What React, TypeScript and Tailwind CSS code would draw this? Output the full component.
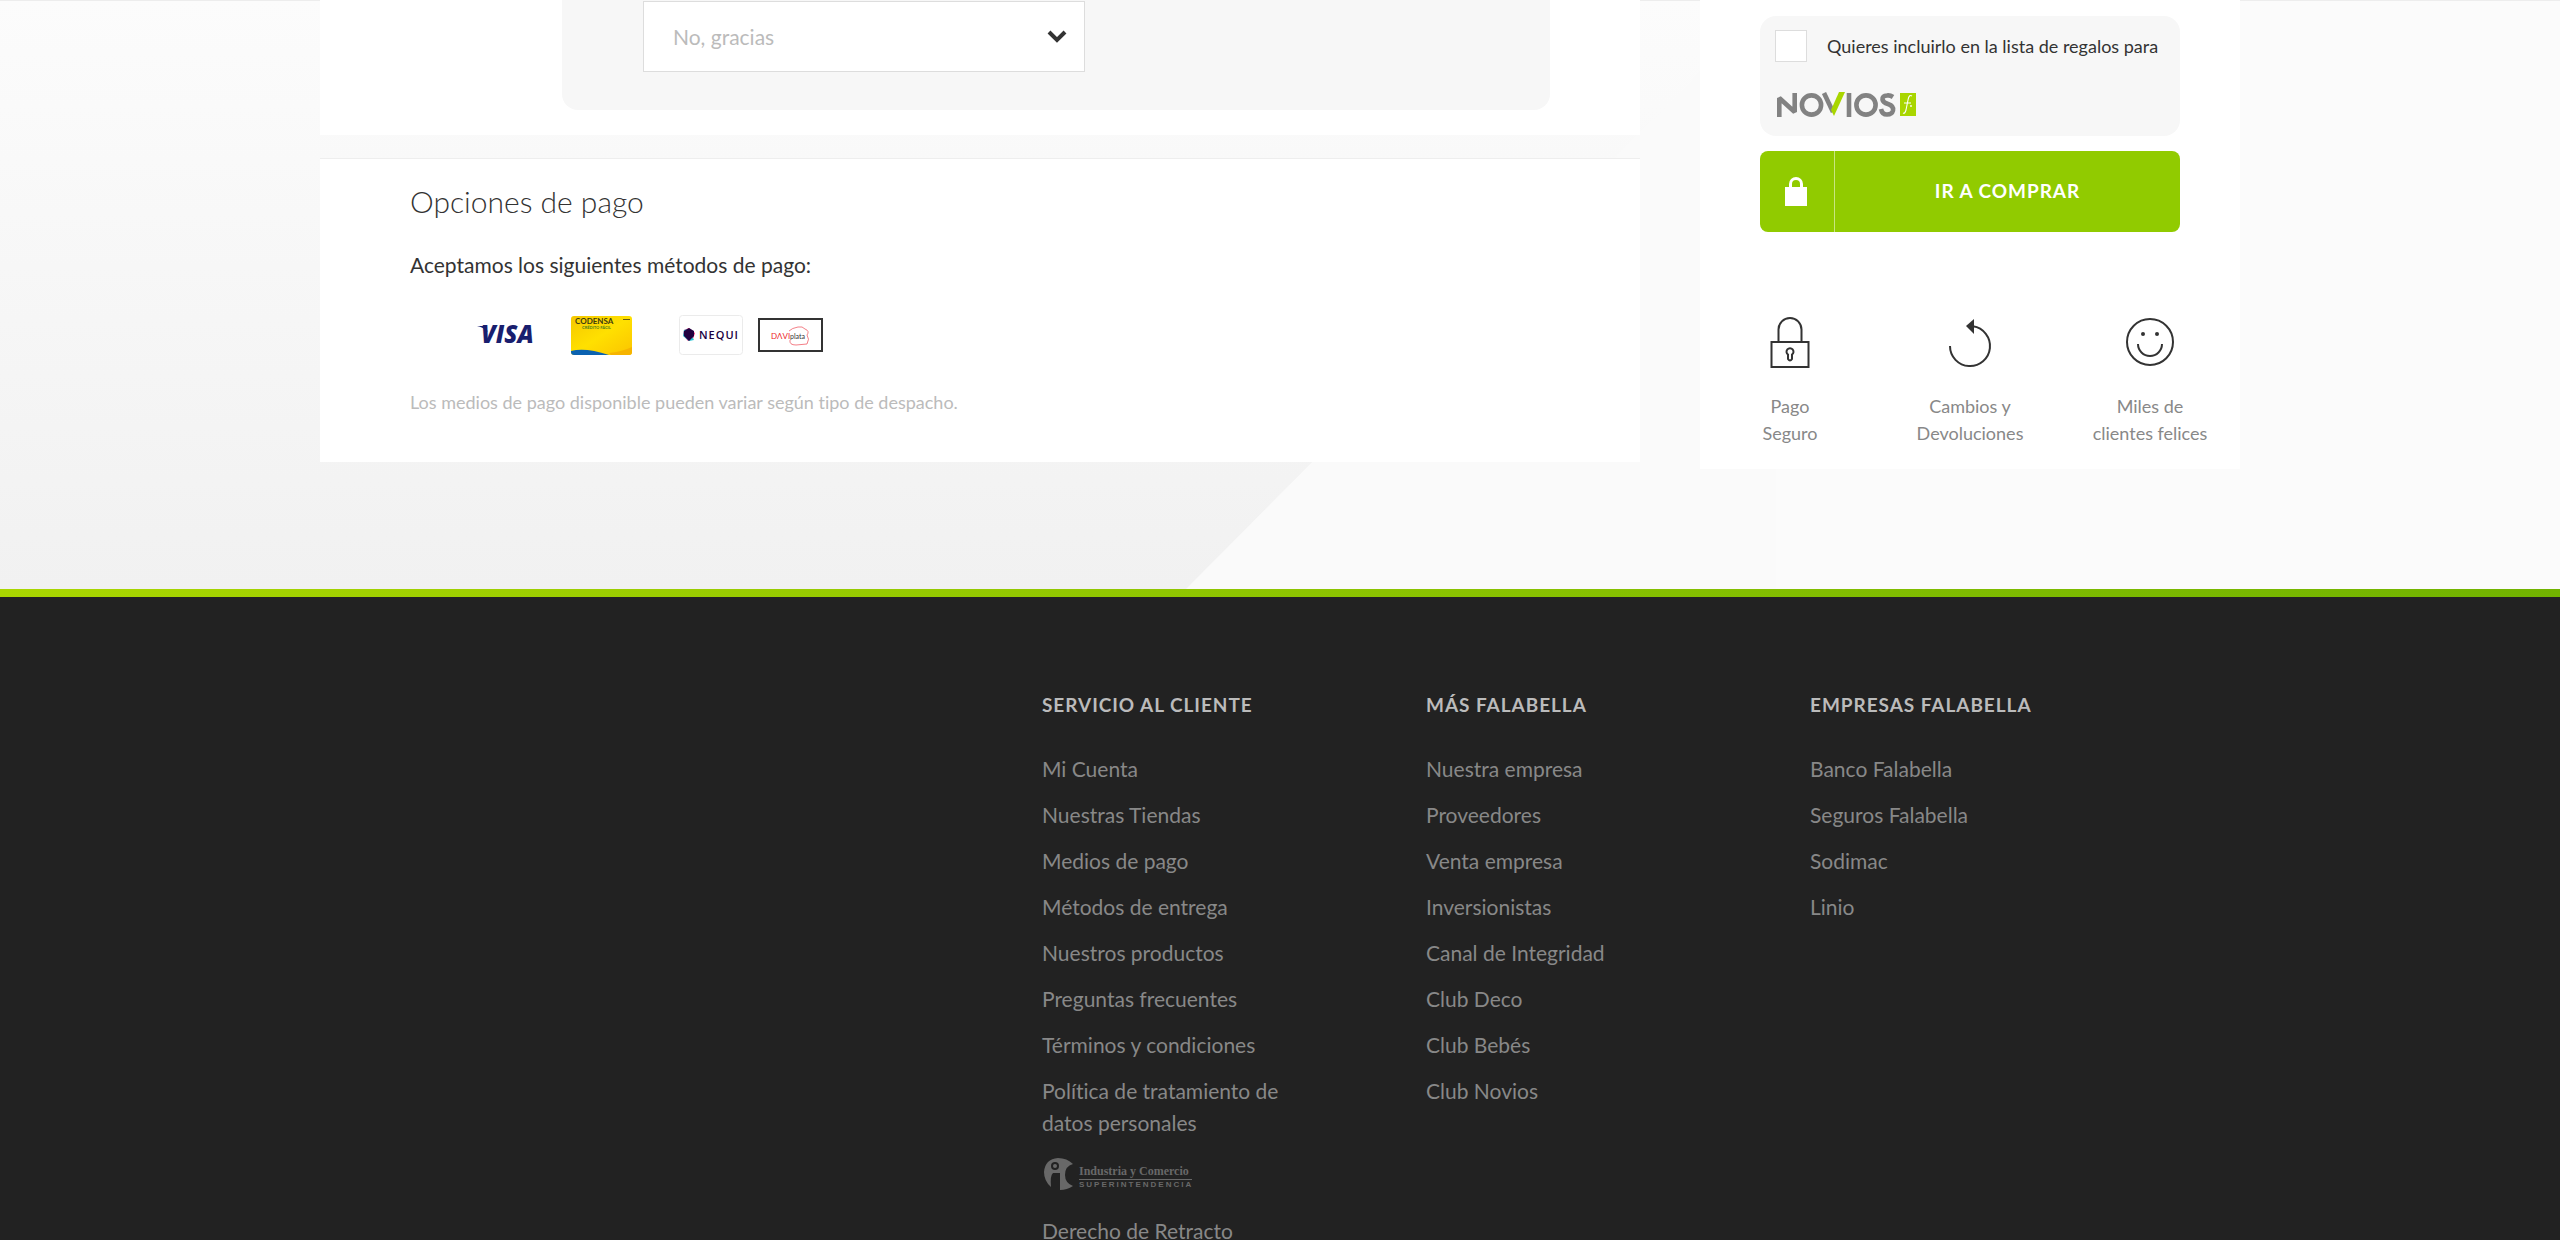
import React from "react";

const columns = [
  {
    title: "SERVICIO AL CLIENTE",
    links: ["Mi Cuenta", "Nuestras Tiendas", "Medios de pago", "Métodos de entrega", "Nuestros productos", "Preguntas frecuentes", "Términos y condiciones", "Política de tratamiento de datos personales"],
  },
  {
    title: "MÁS FALABELLA",
    links: ["Nuestra empresa", "Proveedores", "Venta empresa", "Inversionistas", "Canal de Integridad", "Club Deco", "Club Bebés", "Club Novios"],
  },
  { title: "EMPRESAS FALABELLA", links: ["Banco Falabella", "Seguros Falabella", "Sodimac", "Linio"] },
];

function Visa() {
  return (
    <svg className="h-10 w-16" viewBox="0 0 64 40" aria-label="Visa" role="img">
      <path d="M6 11 H14 L17 17 Q12 12 6 11Z" fill="#191e6e" />
      <text x="10" y="28" fontFamily="Open Sans" fontWeight="800" fontStyle="italic" fontSize="24" fill="#191e6e">VISA</text>
    </svg>
  );
}

function Codensa() {
  return (
    <svg className="h-[39px] w-[61px]" viewBox="0 0 61 39" aria-label="Codensa" role="img">
      <defs>
        <linearGradient id="gold" x1="0" y1="0" x2="1" y2="1">
          <stop offset="0" stopColor="#f5c800" />
          <stop offset="0.5" stopColor="#ffe000" />
          <stop offset="1" stopColor="#fbc400" />
        </linearGradient>
      </defs>
      <rect width="61" height="39" rx="3" fill="url(#gold)" />
      <path d="M0 35 Q14 31 38 39 H3 Q0 39 0 36Z" fill="#0b62b0" />
      <path d="M38 37 Q50 36 61 31 V36 Q61 39 58 39 H40Z" fill="#f6b400" />
      <text x="4" y="8" fontFamily="Lato" fontWeight="700" fontSize="8" fill="#3d3a10">CODENSA</text>
      <text x="11" y="13" fontFamily="Lato" fontWeight="700" fontSize="4" fill="#4d7d1e">CRÉDITO FÁCIL</text>
      <rect x="52" y="3" width="7" height="1" fill="#6b5b10" />
    </svg>
  );
}

function Nequi() {
  return (
    <svg className="h-10 w-16" viewBox="0 0 64 40" aria-label="Nequi" role="img">
      <rect x="0.5" y="0.5" width="63" height="39" rx="3" fill="#fff" stroke="#ebebeb" />
      <path d="M10 13 L16 18 L14 24 L9 26 L4 20 L5 15Z" fill="#ff2e7e" />
      <path d="M5 15 L9 14 L15 25 L10 26 L4 21Z" fill="#25c5d4" />
      <path d="M10 13 L15 16 L15 21 L10 26 L5 21 L5 16Z" fill="#200040" />
      <text x="20" y="24" fontFamily="Open Sans" fontWeight="600" fontSize="11" letterSpacing="1" fill="#200040">NEQUI</text>
    </svg>
  );
}

function Daviplata() {
  return (
    <svg className="h-[34px] w-[65px]" viewBox="0 0 65 34" aria-label="Daviplata" role="img">
      <rect x="1" y="1" width="63" height="32" fill="#fff" stroke="#333" strokeWidth="2" />
      <path d="M31 13 Q34 10 40 9 L44 9 L47 11 Q52 13 49 17 Q52 21 49 26 L38 27 Q31 27 32 22" fill="none" stroke="#f0606a" strokeWidth="0.8" />
      <text x="13" y="20.5" fontFamily="Lato" fontSize="8" fill="#ed1c27">DΛVI</text>
      <text x="32" y="20.5" fontFamily="Lato" fontSize="7" fill="#333">plata</text>
    </svg>
  );
}

function Novios() {
  return (
    <svg className="h-7 w-[144px]" viewBox="0 0 144 28" aria-label="Novios" role="img">
      <g fill="none" stroke="#828282" strokeWidth="4.6">
        <path d="M3.3 25 V6 L18.7 20 V1" strokeLinejoin="bevel" />
        <circle cx="35.5" cy="13" r="9.6" />
        <path d="M48 1 L57 20" />
        <path d="M73 1 V25" />
        <circle cx="90" cy="13" r="9.6" />
        <path d="M117 5 Q114 3 111 3.500 Q106 4 106.500 7.500 Q107 10.500 112 12 Q118 14 117 18.500 Q116 22.500 111 22.500 Q106 22.500 105 17" />
      </g>
      <path d="M63 0 H69 L58 24 L55 18Z" fill="#a9d600" />
      <rect x="124" y="1" width="16" height="23" fill="#a9d600" />
      <path d="M136 4 Q133 2 132 8 L130 18 Q129 22 127 21 M128 11 H135" fill="none" stroke="#fff" strokeWidth="1.1" />
      <circle cx="135" cy="14" r="0.9" fill="#fff" />
    </svg>
  );
}

function Superintendencia() {
  return (
    <svg className="h-10 w-[160px]" viewBox="0 0 160 40" aria-label="Industria y Comercio Superintendencia" role="img">
      <g fill="#686868">
        <path d="M9 32 Q2 26 2 17 Q3 4 16 3 Q25 3 31 9 Q23 11 23 20 Q23 28 31 31 Q25 35 18 35 V18 H11 Q8 20 9 32Z" />
        <circle cx="13" cy="11" r="4" fill="#222" />
        <circle cx="13" cy="11" r="2" />
        <text x="37" y="20" fontFamily="Liberation Serif" fontWeight="700" fontSize="12">Industria y Comercio</text>
        <rect x="37" y="24" width="113" height="1" />
        <text x="37" y="32" fontFamily="Liberation Sans" fontWeight="700" fontSize="8" letterSpacing="2">SUPERINTENDENCIA</text>
      </g>
    </svg>
  );
}

function LockIcon() {
  return (
    <svg className="h-[54px] w-12" viewBox="0 0 48 54" fill="none" stroke="#333" strokeWidth="2" aria-hidden="true">
      <path d="M12.500 25 V13.500 A11.500 11.500 0 0 1 35.500 13.500 V25" />
      <rect x="5.500" y="26" width="37" height="25" />
      <path d="M22 38.500 A3.500 3.500 0 1 1 26 38.500 V43 Q24 46 22 43Z" />
    </svg>
  );
}

function ReturnIcon() {
  return (
    <svg className="h-[54px] w-12" viewBox="0 0 48 54" fill="none" stroke="#333" strokeWidth="2" aria-hidden="true">
      <path d="M4 30 A20 20 0 1 0 27 10.300" />
      <path d="M20 10 L28 3 V18Z" fill="#333" stroke="none" />
    </svg>
  );
}

function SmileIcon() {
  return (
    <svg className="h-[54px] w-12" viewBox="0 0 48 54" fill="none" stroke="#333" strokeWidth="2" aria-hidden="true">
      <circle cx="24" cy="26" r="23" />
      <path d="M12 28 A12 12 0 0 0 36 28" />
      <circle cx="17" cy="18" r="2" fill="#333" stroke="none" />
      <circle cx="31" cy="18" r="2" fill="#333" stroke="none" />
    </svg>
  );
}

const benefits = [
  { icon: <LockIcon />, lines: ["Pago", "Seguro"] },
  { icon: <ReturnIcon />, lines: ["Cambios y", "Devoluciones"] },
  { icon: <SmileIcon />, lines: ["Miles de", "clientes felices"] },
];

export default function App() {
  return (
    <div className="min-h-screen bg-[#222] font-['Lato',sans-serif] text-[#333] [font-variant-ligatures:none]">
      <main className="relative bg-linear-to-b from-[#fcfcfc] to-[#f1f1f1] pb-[120px]">
        <svg className="absolute inset-0 h-full w-full" viewBox="0 0 2560 589" preserveAspectRatio="none" aria-hidden="true">
          <path d="M1772 0 H2560 V589 H1186Z" fill="#fafafa" />
          <path d="M1776 0 H2560 V589 H1776Z" fill="#fbfbfb" />
          <path d="M0 0.500 H2560" stroke="#ededed" />
        </svg>
        <div className="relative mx-auto flex w-3/4 items-start gap-[60px]">
          <div className="min-w-0 flex-1">
            <section className="bg-white pr-[90px] pb-[25px] pl-[242px]">
              <div className="rounded-b-2xl bg-[#f7f7f7] px-[81px] pt-px pb-[38px]">
                <div className="relative w-[442px]">
                  <select aria-label="Garantía" className="h-[71px] w-full appearance-none border border-[#ddd] bg-white px-[29px] text-[21px] text-[#bbb]">
                    <option>No, gracias</option>
                  </select>
                  <svg className="pointer-events-none absolute top-[29px] right-[18px] h-[14px] w-5" viewBox="0 0 20 14" fill="none" stroke="#333" strokeWidth="4" aria-hidden="true">
                    <path d="M2 2 L10 10 L18 2" />
                  </svg>
                </div>
              </div>
            </section>
            <section className="mt-[23px] border-t border-[#eee] bg-white px-[90px] pt-[22px] pb-[45px]">
              <h2 className="text-[30px] leading-10 font-light">Opciones de pago</h2>
              <p className="mt-[28px] text-[21px] leading-8">Aceptamos los siguientes métodos de pago:</p>
              <div className="mt-[34px] flex h-10 items-center pl-[61px]">
                <Visa />
                <div className="ml-9 flex"><Codensa /></div>
                <div className="ml-[47px] flex"><Nequi /></div>
                <div className="ml-[15px] flex"><Daviplata /></div>
              </div>
              <p className="mt-[32px] text-[18px] leading-[30px] text-[#bbb]">Los medios de pago disponible pueden variar según tipo de despacho.</p>
            </section>
          </div>
          <aside className="w-[540px] bg-white px-[60px] pt-4 pb-[22px]">
            <div className="h-[120px] rounded-2xl bg-[#f7f7f7] px-[15px] pt-[14px]">
              <label className="flex items-center gap-5 text-[18px] leading-8">
                <input type="checkbox" className="h-8 w-8 appearance-none border border-[#ddd] bg-white" />
                Quieres incluirlo en la lista de regalos para
              </label>
              <div className="mt-[30px] ml-px"><Novios /></div>
            </div>
            <button className="mt-[15px] flex h-[81px] w-full items-center rounded-lg bg-[#91cb00] text-[19px] font-bold tracking-wider text-white">
              <span className="flex h-full w-[75px] items-center justify-center border-r border-[#c8e580]">
                <svg className="h-[30px] w-6" viewBox="0 0 24 30" aria-hidden="true">
                  <path d="M5.500 12 V7 A5.500 5.500 0 0 1 16.500 7 V12" fill="none" stroke="#fff" strokeWidth="3" />
                  <rect x="0" y="10" width="22" height="19" fill="#fff" />
                </svg>
              </span>
              <span className="flex-1">IR A COMPRAR</span>
            </button>
            <ul className="-mx-[60px] mt-[84px] grid grid-cols-3 text-center text-[18px] leading-[27px] text-[#888]">
              {benefits.map((b) => (
                <li key={b.lines[0]} className="flex flex-col items-center">
                  {b.icon}
                  <p className="mt-[23px]">{b.lines[0]}<br />{b.lines[1]}</p>
                </li>
              ))}
            </ul>
          </aside>
        </div>
      </main>
      <div className="h-2 bg-linear-to-r from-[#a9d600] to-[#71b300]" />
      <footer className="mx-auto flex w-3/4 justify-end pt-[92px] pr-[46px] pb-16 text-[#888]">
        {columns.map((c, i) => (
          <nav key={c.title} aria-label={c.title} className="w-[384px] pr-[120px]">
            <h3 className="text-[19px] leading-8 font-bold tracking-wider whitespace-nowrap text-[#bbb]">{c.title}</h3>
            <ul className="mt-8 text-[21px] leading-8">
              {c.links.map((l) => (
                <li key={l} className="mb-[14px]"><a href="#">{l}</a></li>
              ))}
              {i === 0 && (
                <>
                  <li className="mt-4 mb-[20px]"><a href="#" className="flex"><Superintendencia /></a></li>
                  <li><a href="#">Derecho de Retracto</a></li>
                </>
              )}
            </ul>
          </nav>
        ))}
      </footer>
    </div>
  );
}
